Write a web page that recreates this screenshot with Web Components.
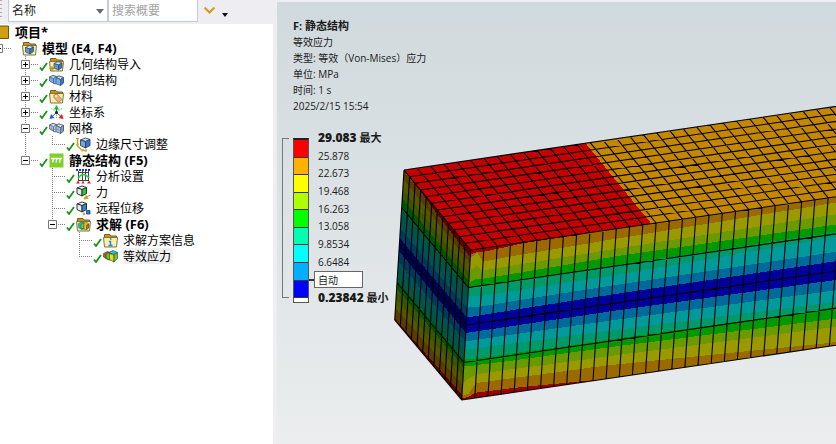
<!DOCTYPE html>
<html lang="zh-CN">
<head>
<meta charset="utf-8">
<title>静态结构</title>
<style>
  body {
    margin: 0;
    font-family: "Open Sans", "Noto Sans CJK SC", sans-serif;
    font-size: 12px;
    color: #000;
  }
</style>
</head>
<body>
<app-shell>
  <outline-toolbar slot="side"></outline-toolbar>
  <outline-tree slot="side">
    <tree-item icon="project" label="项目*" bold root>
      <tree-item icon="model" label="模型 (E4, F4)" bold toggle="minus" last>
        <tree-item icon="import" label="几何结构导入" toggle="plus" done></tree-item>
        <tree-item icon="geometry" label="几何结构" toggle="plus" done></tree-item>
        <tree-item icon="material" label="材料" toggle="plus" done></tree-item>
        <tree-item icon="axes" label="坐标系" toggle="plus" done></tree-item>
        <tree-item icon="mesh" label="网格" toggle="minus" done>
          <tree-item icon="sizing" label="边缘尺寸调整" done last></tree-item>
        </tree-item>
        <tree-item icon="static" label="静态结构 (F5)" bold toggle="minus" done last>
          <tree-item icon="settings" label="分析设置" done></tree-item>
          <tree-item icon="force" label="力" done></tree-item>
          <tree-item icon="remote" label="远程位移" done></tree-item>
          <tree-item icon="solution" label="求解 (F6)" bold toggle="minus" done last>
            <tree-item icon="info" label="求解方案信息" done></tree-item>
            <tree-item icon="stress" label="等效应力" done last selected></tree-item>
          </tree-item>
        </tree-item>
      </tree-item>
    </tree-item>
  </outline-tree>
  <result-viewer slot="main">
    <result-info></result-info>
    <result-legend></result-legend>
  </result-viewer>
</app-shell>

<script>
const cube = (x, y, top, left, right) => `
  <g stroke="#3a4452" stroke-width=".7" stroke-linejoin="round">
    <path d="M${x} ${y + 2}l4-2 4 1.500-3.500 2z" fill="${top}"/>
    <path d="M${x} ${y + 2}l4.500 1.500v5l-4.500-2z" fill="${left}"/>
    <path d="M${x + 4.5} ${y + 3.5}l3.500-2v4.500l-3.500 2.500z" fill="${right}"/>
  </g>`;

const folder = `
  <path d="M1.500 5V1.500h5.500l1 1.500h5.500v2z" fill="#c8960c" stroke="#7d6014"/>
  <path d="M.5 4.500h14l-1 9.500h-12z" fill="#fbefa6" stroke="#77734f"/>`;

const pair = (a, b, c) => `
  <g stroke="#42536a" stroke-width=".7" stroke-linejoin="round">
    <path d="M.5 4l3.500-1.500 3 1 3-.500 4.500 1.500v5.500l-3 2.500-4-1.500-2.500-.500-4.500-2.500z" fill="${b}"/>
    <path d="M.5 4l3.500-1.500 3 1-2.500 2z" fill="${a}"/>
    <path d="M7 4.500l3-1.500 4.500 1.500-3 2z" fill="${a}"/>
    <path d="M11.500 6.500l3-2v5.500l-3 2.500z" fill="${c}"/>
    <path d="M4.500 5.500v5M7 4.500v6.500M7 4.500l4.500 2" fill="none"/>
  </g>`;

const icons = {
  project: `<path d="M0 1h13.500v12.500h-13.500z" fill="#cf9f12" stroke="#6f5510"/>`,
  model: folder + cube(3.5, 4.5, "#c9e2ff", "#5b98dc", "#3f76bd"),
  import: folder + cube(5, 4.5, "#c9e2ff", "#5b98dc", "#3f76bd") +
    `<path d="M3 9v5M.5 11.500h5M1.500 10l3 3M4.500 10l-3 3" stroke="#c08a00" stroke-width=".9"/>`,
  geometry: pair("#c4e0fc", "#74ace8", "#3e77bd"),
  material: folder + `
    <path d="M5 6l3-1 5 5.500-3.500 3-4.500-5z" fill="#e4b582" stroke="#a87339" stroke-width=".8"/>
    <circle cx="7" cy="7" r="1" fill="#fff"/>`,
  axes: `
    <path d="M7.500 7V3M7 8l-4.500 4M8 8l4.500 4" stroke="#555" stroke-width="1"/>
    <path d="M7.500 0l2.500 4.500h-5z" fill="#10c020"/>
    <path d="M14.500 14l-5-1 3.500-4z" fill="#f01818"/>
    <path d="M.5 14l5-1-3.500-4z" fill="#1f62e0"/>
    <path d="M7.500 7l-5-3.500M7.500 7l5.500-3.500M7.500 7v6" stroke="#39b9c8" stroke-width="1" stroke-dasharray="1.500 1"/>
    <circle cx="7.500" cy="7.500" r="1.500" fill="#222"/>`,
  mesh: pair("#e6eef6", "#b6c9e0", "#86a0c0") +
    `<path d="M2.500 5v4M9 5.500v6M.5 7l4 1.500 2.500-.500 4.500 1.500 3-2" fill="none" stroke="#6e819b" stroke-width=".5"/>`,
  sizing: `
    <path d="M1.500 1v8l5 4.500h4" fill="none" stroke="#cf9f24" stroke-width="1.500"/>
    <path d="M0 1.500h3M0 8l3-1M5.500 14.500l2-2.500M10 12v3" stroke="#cf9f24"/>
    <g stroke="#33435a" stroke-width=".9" stroke-linejoin="round">
      <path d="M4.500 3l5-2 4.500 1.500-4.500 2z" fill="#c9e2ff"/>
      <path d="M4.500 3l5 1.500v6.500l-5-2.500z" fill="#6aa8e8"/>
      <path d="M9.500 4.500l4.500-2v6l-4.500 2.500z" fill="#3e77bd"/>
    </g>`,
  static: `
    <path d="M.5 .5h14v14h-14z" fill="#7ed02c"/>
    <path d="M2 5.500h11M4.500 5.500l-1 4M8 5.500l-1 4M11.500 5.500l-1 4" stroke="#fff" stroke-width="1.300"/>`,
  settings: `
    <path d="M2.500 2v10M6.500 2v10M9.500 2v10M12.500 2v10M2 3.500h11M2 11.500h11" stroke="#333" stroke-width=".9"/>
    <path d="M0 1h15" stroke="#1a2ee0" stroke-width="2" stroke-dasharray="2 1"/>
    <path d="M2 9q5.500-7 11 0" fill="none" stroke="#16d030" stroke-width="1.500"/>
    <path d="M0 14.500l2-3 2 3zM5.500 14.500l1.500-3 1.500 3zM11 14.500l2-3 2 3z" fill="#f01818"/>`,
  force: `
    <g stroke="#333" stroke-linejoin="round">
      <path d="M1 3l5-2 4.500 1.500-4.500 2z" fill="#fff"/>
      <path d="M1 3l5 1.500v6.500l-5-2.500z" fill="#e8eef0"/>
      <path d="M6 4.500l4.500-2v6l-4.500 2.500z" fill="#22c83a"/>
    </g>
    <path d="M14.500 10l-4 2M12 13.500l-4 .500 2-3.500z" fill="#cf9f24" stroke="#cf9f24"/>`,
  remote: `
    <g stroke="#333" stroke-linejoin="round">
      <path d="M1 3l5-2 4.500 1.500-4.500 2z" fill="#fff"/>
      <path d="M1 3l5 1.500v6.500l-5-2.500z" fill="#e8eef0"/>
      <path d="M6 4.500l4.500-2v6l-4.500 2.500z" fill="#2a87dc"/>
    </g>
    <path d="M10.500 9.500h3.500v3.500h-3.500z" fill="#2a7cd8" stroke="#123c78" stroke-width=".8"/>
    <path d="M7 13.500l2-1" stroke="#cf9f24" stroke-width="2"/>`,
  solution: folder + `
    <g stroke="#2c5030" stroke-width=".5">
      <path d="M2.500 6.500l3-1.500 3 1v6l-3 .500-3-2z" fill="#25b8c8"/>
      <path d="M5 7l3-1.500v5.500l-3 1z" fill="#6fd32c"/>
      <path d="M8 6l3-.500 2 1.500-.500 4-2.500 2-2-1z" fill="#f2c21a"/>
      <path d="M10.500 8l2-1v4l-2 1.500z" fill="#e8541c"/>
    </g>`,
  info: folder + `<path d="M6 8.500h1.500v4M5.500 12.500h4M7 6h1.500" fill="none" stroke="#1f7fe8" stroke-width="1.300"/>`,
  stress: `
    <g stroke="#27402c" stroke-width=".6" stroke-linejoin="round">
      <path d="M.5 4.500l4-2 3 1.500v7l-3-.500-4-2.500z" fill="#f0401c"/>
      <path d="M3 5l3-1.500 2 .500v7l-2.500-.500-2.500-1.500z" fill="#4fd02c"/>
      <path d="M5.500 3.500l4.500-2 4.500 2-3.500 2z" fill="#25c4d4"/>
      <path d="M6.500 4.500l4.500 1.500v7l-4.500-2.500z" fill="#f4d81c"/>
      <path d="M11 6l3.500-2.500v6l-3.500 3.500z" fill="#58d42e"/>
    </g>`
};

class AppShell extends HTMLElement {
  constructor() {
    super();
    this.attachShadow({ mode: "open" }).innerHTML = `
      <style>
        :host {
          display: flex;
          min-height: 100vh;
          background: #eeeef2;
        }
        aside {
          flex: 0 0 273px;
          display: flex;
          flex-direction: column;
          overflow: hidden;
        }
        main {
          flex: 1;
          min-width: 0;
          display: flex;
          padding: 2px 0 0 4px;
        }
      </style>
      <aside><slot name="side"></slot></aside>
      <main><slot name="main"></slot></main>
    `;
  }
}

class OutlineToolbar extends HTMLElement {
  constructor() {
    super();
    this.attachShadow({ mode: "open" }).innerHTML = `
      <style>
        :host {
          display: flex;
          align-items: flex-start;
          height: 24px;
          background: #eeeef2;
        }
        .grip {
          width: 2px;
          height: 20px;
          margin-right: 6px;
          background: repeating-linear-gradient(#aaa 0 1px, transparent 1px 4px);
        }
        .field {
          display: grid;
          align-items: center;
          width: 100px;
        }
        .field > * {
          grid-area: 1 / 1;
        }
        .field svg {
          justify-self: end;
          margin-right: 4px;
          pointer-events: none;
        }
        select, input {
          box-sizing: border-box;
          height: 22px;
          border: 1px solid #c6c8dc;
          border-top: 0;
          border-radius: 0;
          background: #fff;
          color: #1e1e1e;
          font: inherit;
          padding: 0 3px;
          outline: 0;
        }
        select {
          appearance: none;
        }
        input {
          width: 90px;
        }
        input::placeholder {
          color: #a2a2a2;
        }
        button {
          display: flex;
          padding: 0;
          border: 0;
          background: none;
        }
        .next {
          margin: 6px 6px 0 5px;
        }
        .more {
          margin-top: 13px;
        }
      </style>
      <span class="grip"></span>
      <div class="field">
        <select aria-label="筛选"><option>名称</option></select>
        <svg width="8" height="5"><path d="M0 0h8L4 5z" fill="#666a70"/></svg>
      </div>
      <input type="text" aria-label="搜索概要" placeholder="搜索概要">
      <button class="next" aria-label="下一个">
        <svg width="13" height="9"><path d="M1.500 1.500l5 5 5-5" fill="none" stroke="#cf9a18" stroke-width="2"/></svg>
      </button>
      <button class="more" aria-label="更多">
        <svg width="6" height="4"><path d="M0 0h6L3 4z" fill="#111"/></svg>
      </button>
    `;
  }
}

class OutlineTree extends HTMLElement {
  constructor() {
    super();
    this.attachShadow({ mode: "open" }).innerHTML = `
      <style>
        :host {
          display: block;
          flex: 1;
          background: #fff;
          overflow: hidden;
        }
        /* the tree is scrolled a little to the right */
        div {
          margin-left: -42px;
        }
      </style>
      <div role="tree"><slot></slot></div>
    `;
  }
}

class TreeItem extends HTMLElement {
  constructor() {
    super();
    this.attachShadow({ mode: "open" });
  }

  connectedCallback() {
    const toggle = this.getAttribute("toggle");
    const plus = toggle === "plus" ? "M4.500 2v5" : "";

    this.setAttribute("role", "treeitem");
    this.shadowRoot.innerHTML = `
      <style>
        :host {
          display: block;
          background: repeating-linear-gradient(#808080 0 1px, transparent 1px 2px) 13px 0 / 1px 100% no-repeat;
        }
        :host([last]) {
          background-size: 1px 9px;
        }
        :host([root]) {
          background: none;
        }
        .row {
          display: flex;
          align-items: center;
          height: 16px;
        }
        .guide {
          display: flex;
          align-items: center;
          width: 18px;
          height: 16px;
          padding-left: 9px;
          background: repeating-linear-gradient(90deg, #808080 0 1px, transparent 1px 2px) 13px 8px / 14px 1px no-repeat;
        }
        :host([root]) .guide {
          background: none;
        }
        button {
          display: flex;
          padding: 0;
          border: 0;
          background: #fff;
        }
        .check {
          display: flex;
          width: 10px;
          padding-top: 4px;
        }
        .icon {
          flex: none;
          margin-right: 5px;
        }
        .label {
          padding-top: 2px;
          line-height: 14px;
          white-space: nowrap;
        }
        :host([bold]) .label {
          padding-top: 0;
          font-size: 13px;
          font-weight: bold;
          line-height: 16px;
        }
        :host([selected]) .label {
          background: #f0f0f0;
          padding-right: 2px;
        }
        .children {
          margin-left: 27px;
        }
      </style>
      <div class="row">
        <span class="guide">${toggle ? `
          <button aria-label="展开或折叠">
            <svg width="9" height="9">
              <path d="M.5 .5h8v8h-8z" fill="#fff" stroke="#777"/>
              <path d="M2 4.500h5${plus}" stroke="#000"/>
            </svg>
          </button>` : ""}
        </span>
        <span class="check">${this.hasAttribute("done") ? `
          <svg width="9" height="9"><path d="M1 5.500l2 2.500 5-7" fill="none" stroke="#149414" stroke-width="1.800"/></svg>` : ""}
        </span>
        <svg class="icon" width="15" height="15">${icons[this.getAttribute("icon")]}</svg>
        <span class="label">${this.getAttribute("label")}</span>
      </div>
      <div class="children" role="group"><slot></slot></div>
    `;
  }
}

/* Contour model: one long beam, 12 cells wide and 4 cells high. */
const COLS = 60;
const WIDE = 12;
const HIGH = 4;

const A = [127, 168];
const B = [193.7, 248];
const C = [184.7, 398];
const D = [117.7, 318];

const lerp = (p, q, t) => [p[0] + (q[0] - p[0]) * t, p[1] + (q[1] - p[1]) * t];
const backTop = n => [A[0] + 13.3 * n, A[1] - 1.96 * n];
const frontTop = n => [B[0] + 13.24 * n, B[1] - 1.93 * n];
const frontBottom = n => [C[0] + 13.13 * n, C[1] - 1.92 * n];
const front = (n, f) => lerp(frontTop(n), frontBottom(n), f);
const side = (n, f) => lerp(lerp(A, B, n), lerp(D, C, n), f);

const frontColors = ["#9a0000", "#9a6a00", "#9a9a00", "#6a9a00", "#009a00", "#009a6a", "#009a9a", "#006a9a", "#00009a"];
const sideColors = ["#5a0000", "#5a3c00", "#565600", "#3c5600", "#005600", "#005640", "#005256", "#003a5a", "#00005a"];

// [column, band limits from the top edge to the bottom edge]
const frontBands = [
  [0, [.03, .055, .14, .22, .255, .31, .385, .45, .553, .61, .665, .73, .775, .885, .97, .99]],
  [.5, [.02, .025, .11, .2, .25, .315, .385, .45, .553, .61, .667, .735, .78, .86, .965, .985]],
  [1, [.025, .09, .15, .205, .255, .32, .39, .448, .553, .61, .667, .735, .78, .84, .9, .965]],
  [4, [.006, .08, .145, .2, .25, .318, .385, .445, .552, .61, .67, .737, .785, .843, .903, .97]],
  [11, [0, .067, .134, .185, .245, .312, .378, .438, .55, .612, .68, .738, .79, .85, .91, 1]],
  [28, [0, .038, .118, .187, .238, .27, .37, .434, .56, .63, .706, .75, .82, .875, .978, 1]],
  [COLS, [0, .02, .11, .187, .23, .25, .36, .43, .565, .64, .72, .76, .83, .89, 1, 1]]
];
const sideBands = [
  [0, [0, .06, .13, .19, .25, .32, .39, .455, .54, .61, .67, .74, .79, .86, .92, .99]],
  [1, [.05, .09, .15, .205, .255, .32, .39, .448, .553, .61, .667, .735, .78, .84, .9, .965]]
];

const toPath = pts => "M" + pts.map(p => p.map(v => v.toFixed(1)).join(" ")).join("L");
const line = (p, q) => toPath([p, q]);

function drawBands(bands, point, colors) {
  let out = "";
  for (let i = 0; i <= 16; i++) {
    const upper = bands.map(([n, f]) => point(n, i === 0 ? 0 : f[i - 1]));
    const lower = bands.map(([n, f]) => point(n, i === 16 ? 1 : f[i]));
    const color = colors[i > 8 ? 16 - i : i];
    out += `<path d="${toPath(upper.concat(lower.reverse()))}Z" fill="${color}"/>`;
  }
  return out;
}

function drawMesh() {
  let d = "";
  for (let n = 0; n <= COLS; n++) {
    d += line(backTop(n), frontTop(n)) + line(frontTop(n), frontBottom(n));
  }
  for (let i = 0; i <= WIDE; i++) {
    const t = i / WIDE;
    d += line(lerp(backTop(0), frontTop(0), t), lerp(backTop(COLS), frontTop(COLS), t));
    d += line(side(t, 0), side(t, 1));
  }
  for (let i = 0; i <= HIGH; i++) {
    const t = i / HIGH;
    d += line(front(0, t), front(COLS, t)) + line(side(0, t), side(1, t));
  }
  return `<path d="${d}" fill="none" stroke="#000" stroke-width="1.1" shape-rendering="geometricPrecision"/>`;
}

function drawTop() {
  const split = 13.65;
  const face = (a, b, color) =>
    `<path d="${toPath([backTop(a), backTop(b), frontTop(b), frontTop(a)])}Z" fill="${color}"/>`;
  return face(0, split, "#c40000") + face(split, COLS, "#c48800");
}

class ResultViewer extends HTMLElement {
  constructor() {
    super();
    this.attachShadow({ mode: "open" }).innerHTML = `
      <style>
        :host {
          flex: 1;
          min-width: 0;
          display: grid;
          background: linear-gradient(#d0d9dd, #ebedee);
          overflow: hidden;
        }
        svg, .overlay {
          grid-area: 1 / 1;
        }
        svg {
          width: 100%;
          height: 100%;
        }
        .overlay {
          display: flex;
          flex-direction: column;
          align-items: flex-start;
          gap: 16px;
          padding: 16px 5px;
          z-index: 1;
        }
      </style>
      <svg shape-rendering="crispEdges" role="img" aria-label="等效应力云图">
        ${drawBands(sideBands, side, sideColors)}
        ${drawBands(frontBands, front, frontColors)}
        ${drawTop()}
        ${drawMesh()}
      </svg>
      <div class="overlay"><slot></slot></div>
    `;
  }
}

class ResultInfo extends HTMLElement {
  constructor() {
    super();
    this.attachShadow({ mode: "open" }).innerHTML = `
      <style>
        :host {
          display: block;
          padding-left: 11px;
          font-size: 10px;
          line-height: 16px;
          color: #1a1a1a;
        }
        h1 {
          margin: 0;
          font-size: 11px;
          line-height: 16px;
        }
        p {
          margin: 0;
        }
      </style>
      <h1>F: 静态结构</h1>
      <p>等效应力</p>
      <p>类型: 等效（Von-Mises）应力</p>
      <p>单位: MPa</p>
      <p>时间: 1 s</p>
      <p>2025/2/15 15:54</p>
    `;
  }
}

const legendColors = ["#ff0000", "#ffb000", "#ffff00", "#b0ff00", "#00ff00", "#00ffb0", "#00ffff", "#00b0ff", "#0000ff"];
const legendValues = ["25.878", "22.673", "19.468", "16.263", "13.058", "9.8534", "6.6484"];

class ResultLegend extends HTMLElement {
  constructor() {
    super();
    this.attachShadow({ mode: "open" }).innerHTML = `
      <style>
        :host {
          display: flex;
          height: 176px;
          font-size: 10px;
          color: #1a1a1a;
        }
        .bracket {
          width: 6px;
          margin: 8px 4px 8px 0;
          border: 1px solid #777;
          border-right: 0;
        }
        .bar {
          display: flex;
          flex-direction: column;
          width: 14px;
          margin: 8px 0 3px;
          border: 1px solid #555;
          border-top: 2px solid #222;
        }
        .bar i {
          flex: 1;
          border-bottom: 1px solid #333;
        }
        .bar .rest {
          flex: 0 0 4px;
          border: 0;
          background: #fff;
        }
        .labels {
          display: flex;
          flex-direction: column;
          justify-content: space-between;
        }
        .labels span, .labels strong {
          padding-left: 9px;
          line-height: 16px;
          white-space: nowrap;
        }
        .labels strong {
          font-size: 11px;
        }
        b {
          font-size: 12px;
        }
        .edit {
          display: flex;
          align-items: center;
        }
        .edit::before {
          content: "";
          width: 5px;
          height: 2px;
          background: #333;
        }
        input {
          box-sizing: border-box;
          width: 49px;
          height: 17px;
          border: 1px solid #666;
          padding: 0 3px;
          background: #fff;
          color: #1a1a1a;
          font: inherit;
        }
      </style>
      <div class="bracket"></div>
      <div class="bar">
        ${legendColors.map(c => `<i style="background:${c}"></i>`).join("")}
        <i class="rest"></i>
      </div>
      <div class="labels">
        <strong><b>29.083</b> 最大</strong>
        ${legendValues.map(v => `<span>${v}</span>`).join("")}
        <div class="edit"><input type="text" aria-label="图例值" value="自动"></div>
        <strong><b>0.23842</b> 最小</strong>
      </div>
    `;
  }
}

customElements.define("app-shell", AppShell);
customElements.define("outline-toolbar", OutlineToolbar);
customElements.define("outline-tree", OutlineTree);
customElements.define("tree-item", TreeItem);
customElements.define("result-viewer", ResultViewer);
customElements.define("result-info", ResultInfo);
customElements.define("result-legend", ResultLegend);
</script>
</body>
</html>
